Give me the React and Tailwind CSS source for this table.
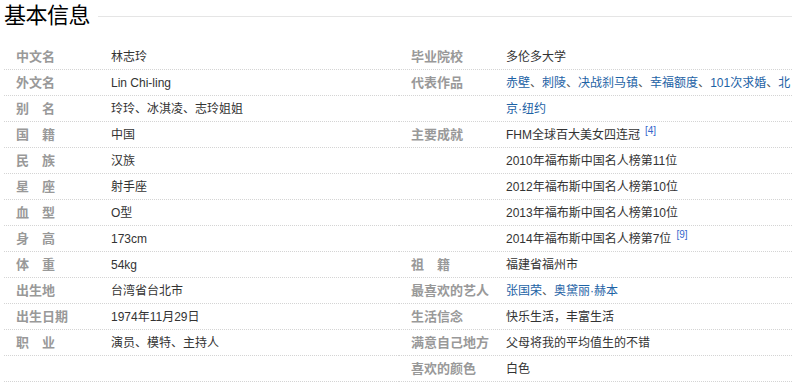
import React from 'react';

const FONT = "font-['Liberation_Sans','Noto_Sans_CJK_SC',sans-serif]";

const Link = ({ children }) => (
  <a className="text-[#1d62a5] no-underline cursor-pointer">{children}</a>
);

const Sep = () => <span className="text-[#555]">、</span>;

const Ref = ({ n }) => (
  <sup className="ml-[5px] text-[10px] text-[#3366cc] relative top-[-5px]">[{n}]</sup>
);

const leftInfo = [
  { label: '中文名', lines: ['林志玲'] },
  { label: '外文名', lines: ['Lin Chi-ling'] },
  { label: '别　名', lines: ['玲玲、冰淇凌、志玲姐姐'] },
  { label: '国　籍', lines: ['中国'] },
  { label: '民　族', lines: ['汉族'] },
  { label: '星　座', lines: ['射手座'] },
  { label: '血　型', lines: ['O型'] },
  { label: '身　高', lines: ['173cm'] },
  { label: '体　重', lines: ['54kg'] },
  { label: '出生地', lines: ['台湾省台北市'] },
  { label: '出生日期', lines: ['1974年11月29日'] },
  { label: '职　业', lines: ['演员、模特、主持人'] },
  { label: '', lines: [''] },
];

const rightInfo = [
  { label: '毕业院校', lines: ['多伦多大学'] },
  {
    label: '代表作品',
    lines: [
      <>
        <Link>赤壁</Link><Sep /><Link>刺陵</Link><Sep /><Link>决战刹马镇</Link><Sep />
        <Link>幸福额度</Link><Sep /><Link>101次求婚</Link><Sep /><Link>北</Link>
      </>,
      <Link>京·纽约</Link>,
    ],
  },
  {
    label: '主要成就',
    lines: [
      <>FHM全球百大美女四连冠<Ref n={4} /></>,
      '2010年福布斯中国名人榜第11位',
      '2012年福布斯中国名人榜第10位',
      '2013年福布斯中国名人榜第10位',
      <>2014年福布斯中国名人榜第7位<Ref n={9} /></>,
    ],
  },
  { label: '祖　籍', lines: ['福建省福州市'] },
  { label: '最喜欢的艺人', lines: [<><Link>张国荣</Link><Sep /><Link>奥黛丽·赫本</Link></>] },
  { label: '生活信念', lines: ['快乐生活，丰富生活'] },
  { label: '满意自己地方', lines: ['父母将我的平均值生的不错'] },
  { label: '喜欢的颜色', lines: ['白色'] },
];

const InfoColumn = ({ items }) => (
  <div className="w-[395px] shrink-0">
    {items.map((item, i) =>
      item.lines.map((line, j) => (
        <div
          key={`${i}-${j}`}
          className="flex h-[26px] leading-[26px] border-b border-dotted border-[#d4d4d4] whitespace-nowrap"
        >
          <div className="w-[107px] shrink-0 pl-[12px] text-[13px] font-bold text-[#999]">
            {j === 0 ? item.label : ''}
          </div>
          <div className="text-[12px] text-[#333]">{line}</div>
        </div>
      ))
    )}
  </div>
);

export default function App() {
  return (
    <div className={`w-[792px] h-[386px] bg-white overflow-hidden ${FONT}`}>
      <div className="flex items-center h-[32px] pl-[4px]">
        <h2 className="text-[22px] leading-[32px] font-normal text-[#000] tracking-[-0.5px]">基本信息</h2>
        <div className="flex-1 ml-[8px] h-px bg-[#e5e5e5]" />
      </div>
      <div className="flex mt-[12px] pl-[4px]">
        <InfoColumn items={leftInfo} />
        <InfoColumn items={rightInfo} />
      </div>
    </div>
  );
}
